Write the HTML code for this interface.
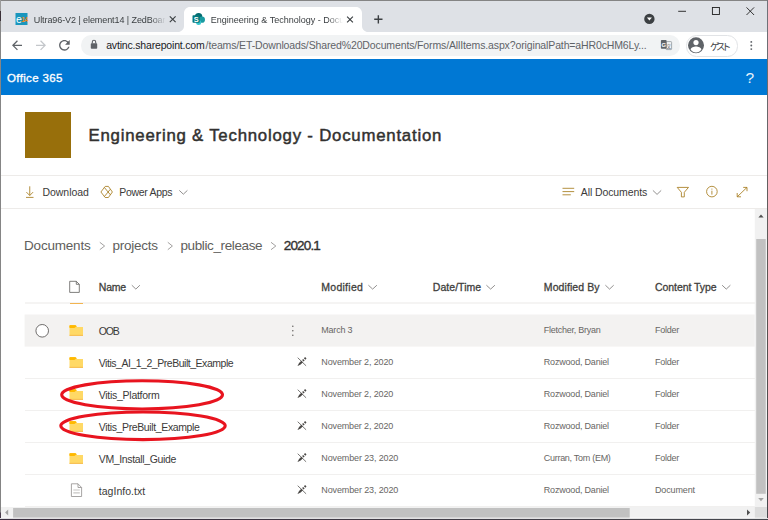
<!DOCTYPE html>
<html lang="en"><head><meta charset="utf-8">
<title>Engineering &amp; Technology - Documentation - All Documents</title>
<style>
html,body{margin:0;padding:0}
body{width:768px;height:520px;overflow:hidden;background:#fff;position:relative;font-family:"Liberation Sans","Noto Sans CJK JP",sans-serif}
.a{position:absolute}
.t{position:absolute;white-space:nowrap}
svg{position:absolute;left:0;top:0;overflow:visible}
.tabtitle1,.tabtitle2{width:133px;overflow:hidden;-webkit-mask-image:linear-gradient(to right,#000 0,#000 117px,transparent 132px);mask-image:linear-gradient(to right,#000 0,#000 117px,transparent 132px)}
.sep{position:absolute;height:1px;background:#edebe9}
</style></head><body>
<!-- ===== browser chrome ===== -->
<div class="a" id="tabstrip" style="left:0;top:0;width:768px;height:32px;background:#dee1e6"></div>
<div class="a" id="toolbar" style="left:0;top:32px;width:768px;height:27px;background:#fff"></div>
<div class="a" id="omnibox" style="left:81px;top:35px;width:599px;height:20.5px;border-radius:10.25px;background:#f1f3f4"></div>
<div class="a" id="profile" style="left:685.8px;top:35px;width:50.7px;height:19.5px;border-radius:10.5px;background:#fff;border:1px solid #e1e3e6;box-sizing:content-box"></div>
<!-- ===== office bar ===== -->
<div class="a" id="o365" style="left:0;top:59px;width:768px;height:36px;background:#0078d4"></div>
<!-- ===== site header ===== -->
<div class="a" id="logo" style="left:25px;top:112px;width:46px;height:46px;background:#986f0b"></div>
<div class="sep" style="left:1px;top:175px;width:766px"></div>
<div class="sep" style="left:1px;top:208px;width:766px"></div>
<!-- ===== list ===== -->
<div class="a" style="left:24.5px;top:302px;width:730.5px;height:2px;background:#f5f4f3"></div>
<div class="a" style="left:69.7px;top:303px;width:13.4px;height:1px;background:#f2b450"></div>
<div class="sep" style="left:24.5px;top:378px;width:730.5px;background:#f1f0ef"></div>
<div class="sep" style="left:24.5px;top:410px;width:730.5px;background:#f1f0ef"></div>
<div class="sep" style="left:24.5px;top:442px;width:730.5px;background:#f1f0ef"></div>
<div class="sep" style="left:24.5px;top:474px;width:730.5px;background:#f1f0ef"></div>
<div class="sep" style="left:24.5px;top:506px;width:730.5px;background:#f1f0ef"></div>
<!-- ===== scrollbars (drawn in svg below) ===== -->
<!-- ===== vector icons ===== -->
<svg width="768" height="520" viewBox="0 0 768 520">
<rect x="24.6" y="314.5" width="730.15" height="32.1" fill="#f3f2f1"/>
<!-- scrollbars -->
<rect x="754.75" y="209" width="12.15" height="298" fill="#f1f1f1"/>
<rect x="756.2" y="239" width="9.55" height="254.8" fill="#c1c1c1"/>
<rect x="1" y="507" width="753.75" height="10.65" fill="#f1f1f1"/>
<rect x="13.1" y="508" width="616.6" height="9.6" fill="#c1c1c1"/>
<rect x="754.75" y="507" width="12.15" height="10.7" fill="#dcdcdc"/>
<!-- active tab -->
<path d="M178 32 C181 32 184 29.5 184 26 V13 C184 9.7 186.7 7 190 7 H356 C359.3 7 362 9.7 362 13 V26 C362 29.5 365 32 368 32 Z" fill="#fff"/>
<!-- favicon 1 -->
<rect x="15.5" y="13" width="12" height="12" fill="#1a96bd"/>
<text x="15.9" y="22.6" font-family="Liberation Sans, sans-serif" font-size="10.5" fill="#fff">e</text>
<text x="21.2" y="22.4" font-family="Liberation Sans, sans-serif" font-size="7" font-weight="700" fill="#f58a1f" letter-spacing="-0.9">14</text>
<!-- tab close x -->
<g stroke="#3c4043" stroke-width="1.15" stroke-linecap="butt" fill="none">
<path d="M169.8 16.4 L175.6 22.2 M175.6 16.4 L169.8 22.2"/>
<path d="M347.1 16.6 L352.9 22.4 M352.9 16.6 L347.1 22.4"/>
<path d="M374.2 19.3 H382.5 M378.35 15.15 V23.45" stroke-width="1.4"/>
</g>
<!-- sharepoint favicon -->
<circle cx="198.6" cy="16.6" r="3.7" fill="#036c70"/>
<circle cx="201.9" cy="19.7" r="3.1" fill="#1a9ba1"/>
<circle cx="198.6" cy="22.5" r="2.5" fill="#37c6d0"/>
<rect x="192.5" y="15.3" width="7.2" height="7.4" rx="0.7" fill="#03787c"/>
<text x="193.7" y="21.7" font-family="Liberation Sans, sans-serif" font-size="7.4" font-weight="700" fill="#fff">S</text>
<!-- tab search dropdown -->
<circle cx="649.4" cy="18.9" r="5.2" fill="#3c4043"/>
<path d="M646.9 17.6 H651.9 L649.4 20.6 Z" fill="#fff"/>
<!-- window controls -->
<g stroke="#1f1f1f" stroke-width="0.9" fill="none">
<path d="M678.2 11.3 H686"/>
<rect x="712.4" y="7.5" width="7" height="7"/>
<path d="M746.5 7.4 L754.1 15 M754.1 7.4 L746.5 15"/>
</g>
<!-- nav -->
<g transform="translate(9.5 37.8) scale(0.625)" fill="#5f6368"><path d="M20 11H7.83l5.59-5.59L12 4l-8 8 8 8 1.41-1.41L7.83 13H20v-2z"/></g>
<g transform="translate(33.5 37.8) scale(0.625)" fill="#c4c7cb"><path d="M12 4l-1.41 1.41L16.17 11H4v2h12.17l-5.58 5.59L12 20l8-8z"/></g>
<g transform="translate(56.4 37.3) scale(0.667)" fill="#5f6368"><path d="M17.65 6.35C16.2 4.9 14.21 4 12 4c-4.42 0-7.99 3.58-7.99 8s3.57 8 7.99 8c3.73 0 6.84-2.55 7.73-6h-2.08c-.82 2.33-3.04 4-5.65 4-3.31 0-6-2.69-6-6s2.69-6 6-6c1.66 0 3.14.69 4.22 1.78L13 11h7V4l-2.35 2.35z"/></g>
<!-- lock -->
<rect x="90.8" y="43.2" width="6.4" height="5.6" rx="0.8" fill="#5f6368"/>
<path d="M92.3 43.4 V42 A1.7 1.7 0 0 1 95.7 42 V43.4" fill="none" stroke="#5f6368" stroke-width="1.1"/>
<!-- translate -->
<rect x="666" y="41.6" width="5.6" height="8" rx="0.7" fill="#f1f3f4" stroke="#9aa0a6" stroke-width="0.9"/>
<rect x="660.9" y="39.9" width="5.7" height="8.8" rx="0.8" fill="#5f6368"/>
<text x="661.6" y="46.6" font-family="Liberation Sans, sans-serif" font-size="5.8" font-weight="700" fill="#fff">G</text>
<text x="666.6" y="48" font-family="Noto Sans CJK JP, sans-serif" font-size="4.6" fill="#5f6368">文</text>
<!-- avatar -->
<circle cx="696" cy="45.3" r="8" fill="#5f6368"/>
<circle cx="696" cy="42.6" r="2.6" fill="#fff"/>
<path d="M690.6 49.6 C690.6 47.4 694 46.4 696 46.4 C698 46.4 701.4 47.4 701.4 49.6 A6.6 6.6 0 0 1 690.6 49.6 Z" fill="#fff"/>
<!-- menu dots -->
<g fill="#5f6368"><circle cx="751.3" cy="41.9" r="0.95"/><circle cx="751.3" cy="45.5" r="0.95"/><circle cx="751.3" cy="49.1" r="0.95"/></g>

<!-- command bar icons -->
<g stroke="#a67c1d" stroke-width="0.85" fill="none">
<path d="M29.75 186.3 V195.4 M26.4 192.1 L29.75 195.5 L33.1 192.1 M26 197.4 H33.5"/>
<path d="M100.9 192 L105.2 186.4 H108.4 L112.4 192 L108.4 197.5 H105.2 Z M104.4 187.5 L110.4 194.8 M104.4 196.5 L110.4 189.2" stroke-linejoin="round"/>
<path d="M562.5 188.3 H574.2 M562.5 191.6 H574.2 M562.5 194.8 H570.8"/>
<path d="M677.2 187.4 H688.5 L684.3 192.3 V196.9 H681.4 V192.3 Z" stroke-linejoin="round"/>
<circle cx="711.9" cy="191.6" r="5.3"/>
<path d="M711.9 190.7 V194.6 M711.9 188.6 V189.6"/>
<path d="M737.2 196.8 L747 187.4 M743.2 187.4 H747 V191.2 M737.2 193 V196.8 H741"/>
</g>
<!-- chevrons down -->
<g stroke="#767472" stroke-width="0.8" fill="none">
<path d="M179.3 190.4 L183.35 194.2 L187.4 190.4"/>
<path d="M652.9 190.4 L657.05 194.4 L661.2 190.4"/>
<path d="M131.8 285.2 L135.85 289.1 L139.9 285.2"/>
<path d="M368.4 285.2 L372.65 289.1 L376.9 285.2"/>
<path d="M486.4 285.2 L490.65 289.1 L494.9 285.2"/>
<path d="M605.4 285.2 L609.55 289.1 L613.7 285.2"/>
<path d="M722.1 285.2 L726.25 289.1 L730.4 285.2"/>
<!-- breadcrumb chevrons -->
<g stroke="#8a8886"><path d="M99.8 242.3 L104.6 246 L99.8 249.7"/>
<path d="M167.8 242.3 L172.4 246 L167.8 249.7"/>
<path d="M271 242.3 L275.8 246 L271 249.7"/></g>
<!-- header file icon -->
<path stroke="#605e5c" d="M69.7 281.3 H76.3 L79.3 284.3 V292.4 H69.7 Z M76.3 281.3 V284.3 H79.3"/>
</g>
<!-- selection circle -->
<circle cx="42.2" cy="330.8" r="6.3" fill="#fff" stroke="#605e5c" stroke-width="0.9"/>
<!-- ellipsis -->
<g fill="#605e5c"><circle cx="292.8" cy="326.3" r="0.75"/><circle cx="292.8" cy="330.8" r="0.75"/><circle cx="292.8" cy="335.3" r="0.75"/></g>
<g transform="translate(69.5 325.15)">
<path d="M0 0.6 C0 0.25 0.25 0 0.6 0 H5.9 C6.3 0 6.6 0.3 6.8 0.6 L7.3 1.9 H0 Z" fill="#ffb900"/>
<path d="M0 1.7 H5.4 L6.9 1.9 H13.5 V10.6 H0 Z" fill="#ffd966"/>
<rect x="0" y="9.7" width="13.5" height="0.95" fill="#f6b94b"/>
<path d="M0 0.6 C0 0.25 0.25 0 0.6 0 H5.6 C6.1 0 6.4 0.4 6.4 0.9 C6.4 1.8 5.8 2.9 4.6 2.9 H0 Z" fill="#ffb900"/>
</g>
<g transform="translate(69.5 357.15)">
<path d="M0 0.6 C0 0.25 0.25 0 0.6 0 H5.9 C6.3 0 6.6 0.3 6.8 0.6 L7.3 1.9 H0 Z" fill="#ffb900"/>
<path d="M0 1.7 H5.4 L6.9 1.9 H13.5 V10.6 H0 Z" fill="#ffd966"/>
<rect x="0" y="9.7" width="13.5" height="0.95" fill="#f6b94b"/>
<path d="M0 0.6 C0 0.25 0.25 0 0.6 0 H5.6 C6.1 0 6.4 0.4 6.4 0.9 C6.4 1.8 5.8 2.9 4.6 2.9 H0 Z" fill="#ffb900"/>
</g>
<g transform="translate(69.5 389.15)">
<path d="M0 0.6 C0 0.25 0.25 0 0.6 0 H5.9 C6.3 0 6.6 0.3 6.8 0.6 L7.3 1.9 H0 Z" fill="#ffb900"/>
<path d="M0 1.7 H5.4 L6.9 1.9 H13.5 V10.6 H0 Z" fill="#ffd966"/>
<rect x="0" y="9.7" width="13.5" height="0.95" fill="#f6b94b"/>
<path d="M0 0.6 C0 0.25 0.25 0 0.6 0 H5.6 C6.1 0 6.4 0.4 6.4 0.9 C6.4 1.8 5.8 2.9 4.6 2.9 H0 Z" fill="#ffb900"/>
</g>
<g transform="translate(69.5 421.15)">
<path d="M0 0.6 C0 0.25 0.25 0 0.6 0 H5.9 C6.3 0 6.6 0.3 6.8 0.6 L7.3 1.9 H0 Z" fill="#ffb900"/>
<path d="M0 1.7 H5.4 L6.9 1.9 H13.5 V10.6 H0 Z" fill="#ffd966"/>
<rect x="0" y="9.7" width="13.5" height="0.95" fill="#f6b94b"/>
<path d="M0 0.6 C0 0.25 0.25 0 0.6 0 H5.6 C6.1 0 6.4 0.4 6.4 0.9 C6.4 1.8 5.8 2.9 4.6 2.9 H0 Z" fill="#ffb900"/>
</g>
<g transform="translate(69.5 453.15)">
<path d="M0 0.6 C0 0.25 0.25 0 0.6 0 H5.9 C6.3 0 6.6 0.3 6.8 0.6 L7.3 1.9 H0 Z" fill="#ffb900"/>
<path d="M0 1.7 H5.4 L6.9 1.9 H13.5 V10.6 H0 Z" fill="#ffd966"/>
<rect x="0" y="9.7" width="13.5" height="0.95" fill="#f6b94b"/>
<path d="M0 0.6 C0 0.25 0.25 0 0.6 0 H5.6 C6.1 0 6.4 0.4 6.4 0.9 C6.4 1.8 5.8 2.9 4.6 2.9 H0 Z" fill="#ffb900"/>
</g>
<!-- doc icon -->
<path d="M71.4 483.8 H78 L81.6 487.5 V496.5 H71.4 Z" fill="#fff" stroke="#979593" stroke-width="0.85"/>
<path d="M78 483.8 V487.5 H81.6" fill="none" stroke="#979593" stroke-width="0.85"/>
<path d="M73.3 490 H79.8 M73.3 492.8 H79.8" stroke="#c8c6c4" stroke-width="1.2"/>
<g transform="translate(297.6 357.6)">
<path d="M0.1 0.1 L8.5 8.2" stroke="#4a4846" stroke-width="0.75" fill="none"/>
<path d="M-0.11 8.29 L1.45 5.32 L3.08 6.95 L0.11 8.51 Z M1.45 5.32 L3.71 3.06 L5.34 4.69 L3.08 6.95 Z M4.49 2.42 L5.55 1.36 L7.04 2.85 L5.98 3.91 Z M6.29 0.69 L7.50 -0.51 L8.91 0.90 L7.71 2.11 Z" fill="#4a4846"/>
</g>
<g transform="translate(297.6 389.6)">
<path d="M0.1 0.1 L8.5 8.2" stroke="#4a4846" stroke-width="0.75" fill="none"/>
<path d="M-0.11 8.29 L1.45 5.32 L3.08 6.95 L0.11 8.51 Z M1.45 5.32 L3.71 3.06 L5.34 4.69 L3.08 6.95 Z M4.49 2.42 L5.55 1.36 L7.04 2.85 L5.98 3.91 Z M6.29 0.69 L7.50 -0.51 L8.91 0.90 L7.71 2.11 Z" fill="#4a4846"/>
</g>
<g transform="translate(297.6 421.6)">
<path d="M0.1 0.1 L8.5 8.2" stroke="#4a4846" stroke-width="0.75" fill="none"/>
<path d="M-0.11 8.29 L1.45 5.32 L3.08 6.95 L0.11 8.51 Z M1.45 5.32 L3.71 3.06 L5.34 4.69 L3.08 6.95 Z M4.49 2.42 L5.55 1.36 L7.04 2.85 L5.98 3.91 Z M6.29 0.69 L7.50 -0.51 L8.91 0.90 L7.71 2.11 Z" fill="#4a4846"/>
</g>
<g transform="translate(297.6 453.6)">
<path d="M0.1 0.1 L8.5 8.2" stroke="#4a4846" stroke-width="0.75" fill="none"/>
<path d="M-0.11 8.29 L1.45 5.32 L3.08 6.95 L0.11 8.51 Z M1.45 5.32 L3.71 3.06 L5.34 4.69 L3.08 6.95 Z M4.49 2.42 L5.55 1.36 L7.04 2.85 L5.98 3.91 Z M6.29 0.69 L7.50 -0.51 L8.91 0.90 L7.71 2.11 Z" fill="#4a4846"/>
</g>
<g transform="translate(297.6 485.6)">
<path d="M0.1 0.1 L8.5 8.2" stroke="#4a4846" stroke-width="0.75" fill="none"/>
<path d="M-0.11 8.29 L1.45 5.32 L3.08 6.95 L0.11 8.51 Z M1.45 5.32 L3.71 3.06 L5.34 4.69 L3.08 6.95 Z M4.49 2.42 L5.55 1.36 L7.04 2.85 L5.98 3.91 Z M6.29 0.69 L7.50 -0.51 L8.91 0.90 L7.71 2.11 Z" fill="#4a4846"/>
</g>
<!-- red annotation ellipses -->
<ellipse cx="142.1" cy="394.85" rx="80.4" ry="14.1" fill="none" stroke="#e8141f" stroke-width="3.1"/>
<ellipse cx="143" cy="425.8" rx="82.2" ry="13.8" fill="none" stroke="#e8141f" stroke-width="3.1"/>
<!-- scrollbar arrows -->
<path d="M758.4 217.4 H763.6 L761 214.4 Z" fill="#505050"/>
<path d="M758.2 498.1 H763.8 L761 501.2 Z" fill="#a3a3a3"/>
<path d="M8.2 509.6 V515.4 L5.1 512.5 Z" fill="#a3a3a3"/>
<path d="M747 509.6 V515.4 L750.2 512.5 Z" fill="#505050"/>
</svg>
<!-- ===== text ===== -->
<span class="t tabtitle1" style="left:33.75px;top:16.00px;font-size:9px;line-height:9px;color:#3c4043;letter-spacing:-0.080px;">Ultra96-V2 | element14 | ZedBoar</span>
<span class="t tabtitle2" style="left:210.80px;top:16.00px;font-size:9px;line-height:9px;color:#3c4043;">Engineering &amp; Technology - Docu</span>
<span class="t" style="left:106.20px;top:40.00px;font-size:10.5px;line-height:10.5px;color:#202124;letter-spacing:-0.179px;">avtinc.sharepoint.com</span>
<span class="t" style="left:205.60px;top:40.00px;font-size:10.5px;line-height:10.5px;color:#5f6368;letter-spacing:-0.129px;">/teams/ET-Downloads/Shared%20Documents/Forms/AllItems.aspx?originalPath=aHR0cHM6Ly...</span>
<span class="t" style="left:710.00px;top:42.00px;font-size:9.5px;line-height:9.5px;color:#3c4043;letter-spacing:-3.600px;">ゲスト</span>
<span class="t" style="left:7.00px;top:73.00px;font-size:11.5px;line-height:11.5px;color:#ffffff;-webkit-text-stroke:0.32px #ffffff;letter-spacing:0.354px;">Office 365</span>
<span class="t" style="left:745.50px;top:70.00px;font-size:15.5px;line-height:15.5px;color:#eaf3fb;">?</span>
<span class="t" style="left:88.50px;top:128.00px;font-size:16.8px;line-height:16.8px;color:#323130;-webkit-text-stroke:0.47px #323130;letter-spacing:0.779px;">Engineering &amp; Technology - Documentation</span>
<span class="t" style="left:42.50px;top:187.00px;font-size:10.5px;line-height:10.5px;color:#3b3a39;letter-spacing:-0.051px;">Download</span>
<span class="t" style="left:119.20px;top:187.00px;font-size:10.5px;line-height:10.5px;color:#3b3a39;letter-spacing:-0.307px;">Power Apps</span>
<span class="t" style="left:580.80px;top:187.00px;font-size:10.5px;line-height:10.5px;color:#3b3a39;letter-spacing:-0.103px;">All Documents</span>
<span class="t" style="left:24.00px;top:239.00px;font-size:13.5px;line-height:13.5px;color:#605e5c;letter-spacing:-0.191px;">Documents</span>
<span class="t" style="left:112.50px;top:239.00px;font-size:13.5px;line-height:13.5px;color:#605e5c;letter-spacing:-0.246px;">projects</span>
<span class="t" style="left:180.50px;top:239.00px;font-size:13.5px;line-height:13.5px;color:#605e5c;letter-spacing:-0.388px;">public_release</span>
<span class="t" style="left:283.80px;top:239.00px;font-size:13.5px;line-height:13.5px;color:#323130;-webkit-text-stroke:0.38px #323130;letter-spacing:-0.857px;">2020.1</span>
<span class="t" style="left:98.80px;top:282.00px;font-size:10.5px;line-height:10.5px;color:#403e3c;-webkit-text-stroke:0.29px #403e3c;letter-spacing:-0.223px;">Name</span>
<span class="t" style="left:321.30px;top:282.00px;font-size:10.5px;line-height:10.5px;color:#403e3c;-webkit-text-stroke:0.29px #403e3c;letter-spacing:0.265px;">Modified</span>
<span class="t" style="left:432.80px;top:282.00px;font-size:10.5px;line-height:10.5px;color:#403e3c;-webkit-text-stroke:0.29px #403e3c;letter-spacing:0.038px;">Date/Time</span>
<span class="t" style="left:543.80px;top:282.00px;font-size:10.5px;line-height:10.5px;color:#403e3c;-webkit-text-stroke:0.29px #403e3c;letter-spacing:0.089px;">Modified By</span>
<span class="t" style="left:655.00px;top:282.00px;font-size:10.5px;line-height:10.5px;color:#403e3c;-webkit-text-stroke:0.29px #403e3c;letter-spacing:-0.056px;">Content Type</span>
<span class="t" style="left:98.75px;top:326.00px;font-size:10.5px;line-height:10.5px;color:#3b3a39;letter-spacing:-1.167px;">OOB</span>
<span class="t" style="left:321.30px;top:326.00px;font-size:9px;line-height:9px;color:#686664;letter-spacing:-0.218px;">March 3</span>
<span class="t" style="left:543.80px;top:326.00px;font-size:9px;line-height:9px;color:#686664;letter-spacing:-0.251px;">Fletcher, Bryan</span>
<span class="t" style="left:655.00px;top:326.00px;font-size:9px;line-height:9px;color:#686664;letter-spacing:-0.263px;">Folder</span>
<span class="t" style="left:98.75px;top:358.00px;font-size:10.5px;line-height:10.5px;color:#3b3a39;letter-spacing:-0.472px;">Vitis_AI_1_2_PreBuilt_Example</span>
<span class="t" style="left:321.30px;top:358.00px;font-size:9px;line-height:9px;color:#686664;letter-spacing:-0.136px;">November 2, 2020</span>
<span class="t" style="left:543.80px;top:358.00px;font-size:9px;line-height:9px;color:#686664;letter-spacing:-0.195px;">Rozwood, Daniel</span>
<span class="t" style="left:655.00px;top:358.00px;font-size:9px;line-height:9px;color:#686664;letter-spacing:-0.263px;">Folder</span>
<span class="t" style="left:98.75px;top:390.00px;font-size:10.5px;line-height:10.5px;color:#3b3a39;letter-spacing:-0.272px;">Vitis_Platform</span>
<span class="t" style="left:321.30px;top:390.00px;font-size:9px;line-height:9px;color:#686664;letter-spacing:-0.136px;">November 2, 2020</span>
<span class="t" style="left:543.80px;top:390.00px;font-size:9px;line-height:9px;color:#686664;letter-spacing:-0.195px;">Rozwood, Daniel</span>
<span class="t" style="left:655.00px;top:390.00px;font-size:9px;line-height:9px;color:#686664;letter-spacing:-0.263px;">Folder</span>
<span class="t" style="left:98.75px;top:422.00px;font-size:10.5px;line-height:10.5px;color:#3b3a39;letter-spacing:-0.372px;">Vitis_PreBuilt_Example</span>
<span class="t" style="left:321.30px;top:422.00px;font-size:9px;line-height:9px;color:#686664;letter-spacing:-0.136px;">November 2, 2020</span>
<span class="t" style="left:543.80px;top:422.00px;font-size:9px;line-height:9px;color:#686664;letter-spacing:-0.195px;">Rozwood, Daniel</span>
<span class="t" style="left:655.00px;top:422.00px;font-size:9px;line-height:9px;color:#686664;letter-spacing:-0.263px;">Folder</span>
<span class="t" style="left:98.75px;top:454.00px;font-size:10.5px;line-height:10.5px;color:#3b3a39;letter-spacing:-0.353px;">VM_Install_Guide</span>
<span class="t" style="left:321.30px;top:454.00px;font-size:9px;line-height:9px;color:#686664;letter-spacing:-0.128px;">November 23, 2020</span>
<span class="t" style="left:543.80px;top:454.00px;font-size:9px;line-height:9px;color:#686664;letter-spacing:-0.287px;">Curran, Tom (EM)</span>
<span class="t" style="left:655.00px;top:454.00px;font-size:9px;line-height:9px;color:#686664;letter-spacing:-0.263px;">Folder</span>
<span class="t" style="left:98.75px;top:486.00px;font-size:10.5px;line-height:10.5px;color:#3b3a39;letter-spacing:0.031px;">tagInfo.txt</span>
<span class="t" style="left:321.30px;top:486.00px;font-size:9px;line-height:9px;color:#686664;letter-spacing:-0.128px;">November 23, 2020</span>
<span class="t" style="left:543.80px;top:486.00px;font-size:9px;line-height:9px;color:#686664;letter-spacing:-0.195px;">Rozwood, Daniel</span>
<span class="t" style="left:655.00px;top:486.00px;font-size:9px;line-height:9px;color:#686664;letter-spacing:-0.145px;">Document</span>
<!-- ===== window frame ===== -->
<div class="a" style="left:0;top:0;width:768px;height:1px;background:#848484"></div>
<div class="a" style="left:0;top:0;width:1px;height:520px;background:linear-gradient(to bottom,#9a9a9a 0,#9a9a9a 11px,#3a3038 11px,#3a3038 21px,#868686 21px,#848484 512px,#4a3d4c 513px,#4a3d4c 520px)"></div>
<div class="a" style="left:767px;top:0;width:1px;height:520px;background:linear-gradient(to bottom,#70737a 0,#5a5350 300px,#45464b 520px)"></div>
<div class="a" style="left:0;top:518px;width:768px;height:1px;background:linear-gradient(to right,#e0dee1,#e2e2e3)"></div>
<div class="a" style="left:0;top:519px;width:768px;height:1px;background:linear-gradient(to right,#3a2f3f,#46484d)"></div>
</body></html>
